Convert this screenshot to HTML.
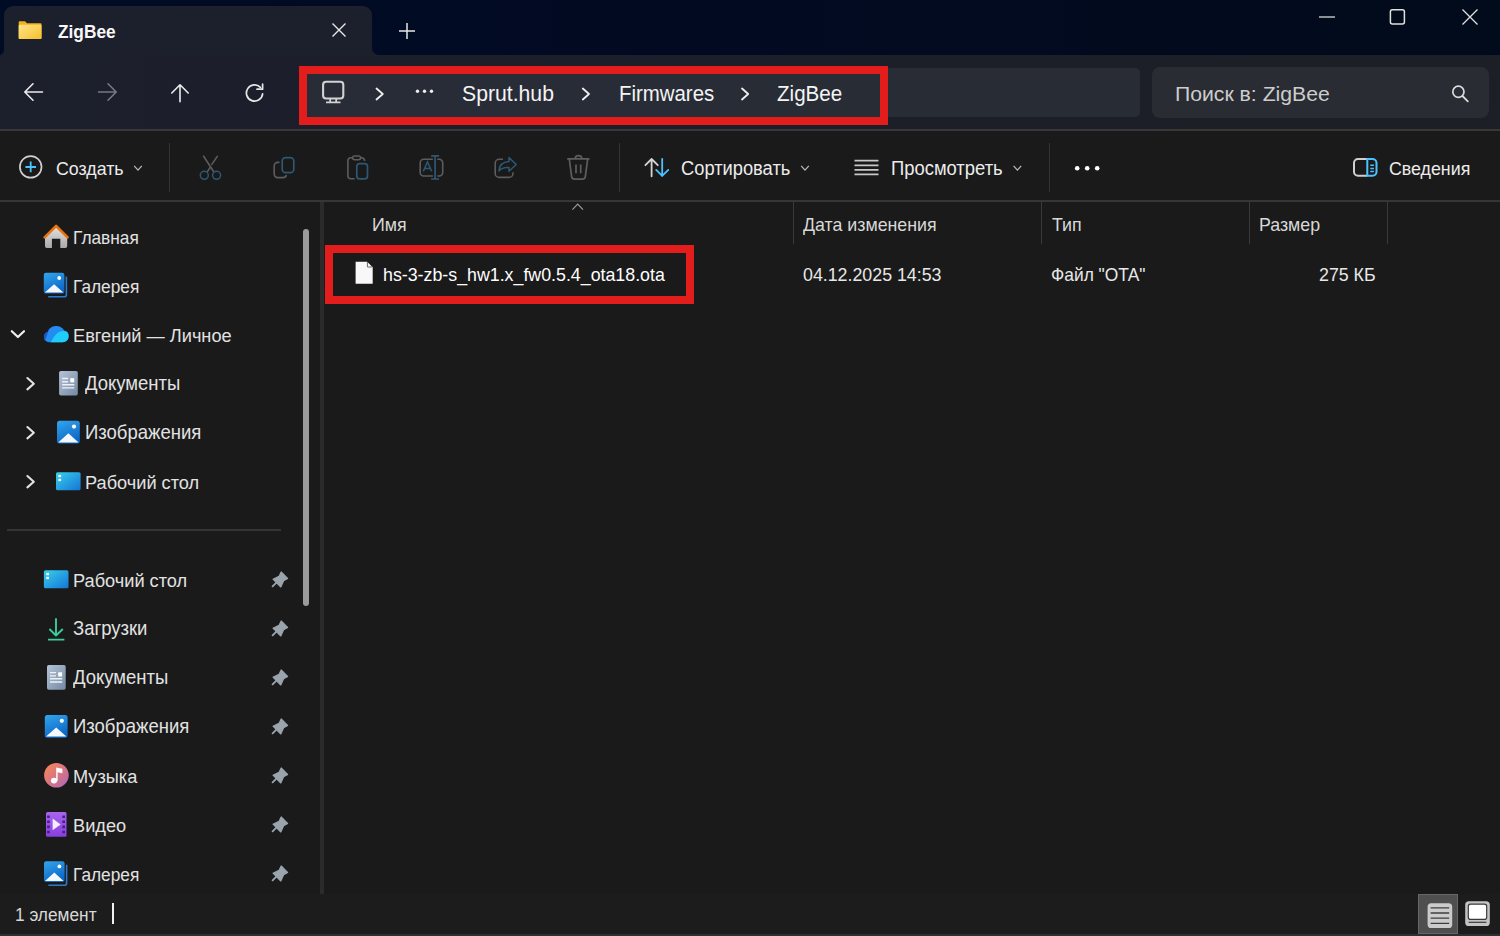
<!DOCTYPE html>
<html><head><meta charset="utf-8">
<style>
*{margin:0;padding:0;box-sizing:border-box}
html,body{width:1500px;height:936px;overflow:hidden;background:#1a1a1a;font-family:"Liberation Sans",sans-serif;color:#e8e8e8}
.a{position:absolute}
.t{position:absolute;white-space:nowrap;line-height:1;transform-origin:0 0}
svg{position:absolute;overflow:visible}
</style></head><body>
<!-- title bar -->
<div class="a" style="left:0;top:0;width:1500px;height:55px;background:linear-gradient(90deg,#000b25 0%,#010a21 45%,#020b1b 100%)"></div>
<!-- address row -->
<div class="a" style="left:0;top:55px;width:1500px;height:74px;background:linear-gradient(90deg,#1c1f2c 0%,#1c1f29 50%,#1c1f25 100%)"></div>
<!-- tab -->
<div class="a" style="left:4px;top:6px;width:368px;height:50px;background:#1c1f2c;border-radius:9px 9px 0 0"></div>
<div class="a" style="left:0;top:45px;width:4px;height:10px;background:#1c1f2c"></div>
<div class="a" style="left:-6px;top:30px;width:10px;height:25px;background:#000b25;border-bottom-right-radius:5px"></div>
<div class="a" style="left:372px;top:45px;width:10px;height:10px;background:#1c1f2c"></div>
<div class="a" style="left:372px;top:30px;width:10px;height:25px;background:#010b24;border-bottom-left-radius:7px"></div>
<!-- separator lines -->
<div class="a" style="left:0;top:129px;width:1500px;height:2px;background:#383838"></div>
<div class="a" style="left:0;top:131px;width:1500px;height:69px;background:#1a1a1a"></div>
<div class="a" style="left:0;top:200px;width:1500px;height:2px;background:#363636"></div>
<!-- address box -->
<div class="a" style="left:303px;top:68px;width:837px;height:49px;background:linear-gradient(90deg,#282c37,#282c34);border-radius:5px"></div>
<div class="a" style="left:299px;top:66px;width:589px;height:59px;border:8px solid #e31c1c"></div>
<!-- search box -->
<div class="a" style="left:1152px;top:67px;width:337px;height:51px;background:#292c33;border-radius:8px"></div>
<!-- command bar text -->
<div class="a" style="left:169px;top:143px;width:1px;height:49px;background:#333"></div>
<div class="a" style="left:619px;top:143px;width:1px;height:49px;background:#333"></div>
<div class="a" style="left:1049px;top:143px;width:1px;height:49px;background:#333"></div>
<!-- nav pane -->
<div class="a" style="left:0;top:202px;width:320px;height:692px;background:#1a1a1a"></div>
<div class="a" style="left:320px;top:202px;width:4px;height:692px;background:#2b2b2b"></div>
<div class="a" style="left:303px;top:229px;width:6px;height:377px;background:#9b9b9b;border-radius:3px"></div>
<div class="a" style="left:7px;top:529px;width:274px;height:2px;background:#353535"></div>
<!-- list -->
<div class="a" style="left:793px;top:202px;width:1px;height:42px;background:#3a3a3a"></div>
<div class="a" style="left:1041px;top:202px;width:1px;height:42px;background:#3a3a3a"></div>
<div class="a" style="left:1249px;top:202px;width:1px;height:42px;background:#3a3a3a"></div>
<div class="a" style="left:1387px;top:202px;width:1px;height:42px;background:#3a3a3a"></div>
<div class="a" style="left:325px;top:245px;width:369px;height:59px;border:8px solid #e31c1c"></div>
<!-- status bar -->
<div class="a" style="left:0;top:894px;width:1500px;height:40px;background:#1c1c1c"></div>
<div class="a" style="left:0;top:934px;width:1500px;height:2px;background:#2d2f33"></div>
<div class="a" style="left:112px;top:903px;width:2px;height:21px;background:#f0f0f0"></div>
<div class="a" style="left:1418px;top:894px;width:40px;height:40px;background:#4f4f4f;border:1px solid #666"></div>
<div class="t" style="left:57.5px;top:22.73px;font-size:18.51px;transform:scaleX(0.9346);color:#f8f8f8;font-weight:700">ZigBee</div>
<div class="t" style="left:462px;top:82.94px;font-size:22.05px;transform:scaleX(0.9615);color:#f4f4f4">Sprut.hub</div>
<div class="t" style="left:619px;top:83.24px;font-size:21.22px;transform:scaleX(0.9615);color:#f4f4f4">Firmwares</div>
<div class="t" style="left:777px;top:83.86px;font-size:21.42px;transform:scaleX(0.9615);color:#f4f4f4">ZigBee</div>
<div class="t" style="left:1175px;top:83.77px;font-size:20.35px;transform:scaleX(1.0417);color:#cdcdcd">Поиск в: ZigBee</div>
<div class="t" style="left:56px;top:159.60px;font-size:18.78px;transform:scaleX(0.9479);color:#ececec">Создать</div>
<div class="t" style="left:681px;top:159.16px;font-size:19.31px;transform:scaleX(0.9479);color:#ececec">Сортировать</div>
<div class="t" style="left:891px;top:159.07px;font-size:19.41px;transform:scaleX(0.9479);color:#ececec">Просмотреть</div>
<div class="t" style="left:1389px;top:159.60px;font-size:18.78px;transform:scaleX(0.9479);color:#ececec">Сведения</div>
<div class="t" style="left:73px;top:228.55px;font-size:18.25px;transform:scaleX(0.9479);color:#e2e2e2">Главная</div>
<div class="t" style="left:73px;top:277.55px;font-size:18.25px;transform:scaleX(0.9479);color:#e2e2e2">Галерея</div>
<div class="t" style="left:73px;top:325.75px;font-size:19.20px;transform:scaleX(0.9479);color:#e2e2e2">Евгений — Личное</div>
<div class="t" style="left:85px;top:374.48px;font-size:19.52px;transform:scaleX(0.9479);color:#e2e2e2">Документы</div>
<div class="t" style="left:85px;top:423.48px;font-size:19.52px;transform:scaleX(0.9479);color:#e2e2e2">Изображения</div>
<div class="t" style="left:85px;top:472.75px;font-size:19.20px;transform:scaleX(0.9479);color:#e2e2e2">Рабочий стол</div>
<div class="t" style="left:73px;top:570.75px;font-size:19.20px;transform:scaleX(0.9479);color:#e2e2e2">Рабочий стол</div>
<div class="t" style="left:73px;top:619.48px;font-size:19.52px;transform:scaleX(0.9479);color:#e2e2e2">Загрузки</div>
<div class="t" style="left:73px;top:668.48px;font-size:19.52px;transform:scaleX(0.9479);color:#e2e2e2">Документы</div>
<div class="t" style="left:73px;top:717.48px;font-size:19.52px;transform:scaleX(0.9479);color:#e2e2e2">Изображения</div>
<div class="t" style="left:73px;top:766.75px;font-size:19.20px;transform:scaleX(0.9479);color:#e2e2e2">Музыка</div>
<div class="t" style="left:73px;top:815.75px;font-size:19.20px;transform:scaleX(0.9479);color:#e2e2e2">Видео</div>
<div class="t" style="left:73px;top:865.55px;font-size:18.25px;transform:scaleX(0.9479);color:#e2e2e2">Галерея</div>
<div class="t" style="left:371.5px;top:215.80px;font-size:18.78px;transform:scaleX(0.9479);color:#d8d8d8">Имя</div>
<div class="t" style="left:803px;top:215.80px;font-size:18.78px;transform:scaleX(0.9479);color:#d8d8d8">Дата изменения</div>
<div class="t" style="left:1051.5px;top:215.80px;font-size:18.78px;transform:scaleX(0.9479);color:#d8d8d8">Тип</div>
<div class="t" style="left:1259px;top:215.80px;font-size:18.78px;transform:scaleX(0.9479);color:#d8d8d8">Размер</div>
<div class="t" style="left:383px;top:265.60px;font-size:18.78px;transform:scaleX(0.9479);color:#fff">hs-3-zb-s_hw1.x_fw0.5.4_ota18.ota</div>
<div class="t" style="left:803px;top:265.60px;font-size:18.78px;transform:scaleX(0.9479)">04.12.2025 14:53</div>
<div class="t" style="left:1051px;top:265.96px;font-size:18.36px;transform:scaleX(0.9479)">Файл "OTA"</div>
<div class="t" style="left:1319px;top:265.60px;font-size:18.78px;transform:scaleX(0.9479)">275 КБ</div>
<div class="t" style="left:15px;top:906.45px;font-size:18.25px;transform:scaleX(0.9479);color:#d8d8d8">1 элемент</div>
<svg width="1500" height="936" style="left:0;top:0" viewBox="0 0 1500 936">
<defs>
<linearGradient id="gFold" x1="0" y1="0" x2="1" y2="1"><stop offset="0" stop-color="#ffe489"/><stop offset="1" stop-color="#f6c02e"/></linearGradient>
<linearGradient id="gHouse" x1="0" y1="0" x2="0" y2="1"><stop offset="0" stop-color="#e2e2e2"/><stop offset="1" stop-color="#a9a9a9"/></linearGradient>
<linearGradient id="gPic" x1="0" y1="0" x2="0.4" y2="1"><stop offset="0" stop-color="#32a6ec"/><stop offset="1" stop-color="#0e68c8"/></linearGradient>
<linearGradient id="gDesk" x1="0" y1="0" x2="1" y2="1"><stop offset="0" stop-color="#38d0ec"/><stop offset="1" stop-color="#1574d6"/></linearGradient>
<linearGradient id="gDoc" x1="0" y1="0" x2="1" y2="1"><stop offset="0" stop-color="#b5c4d6"/><stop offset="1" stop-color="#7489a3"/></linearGradient>
<linearGradient id="gCloud" x1="0" y1="0" x2="1" y2="0"><stop offset="0" stop-color="#1a66dc"/><stop offset="0.45" stop-color="#2596f0"/><stop offset="1" stop-color="#1ed2f8"/></linearGradient>
<linearGradient id="gMusic" x1="0" y1="0" x2="1" y2="1"><stop offset="0" stop-color="#f78b52"/><stop offset="0.5" stop-color="#da7480"/><stop offset="1" stop-color="#ad68bc"/></linearGradient>
<linearGradient id="gVid" x1="0" y1="0" x2="0" y2="1"><stop offset="0" stop-color="#a865ec"/><stop offset="1" stop-color="#8a3ee0"/></linearGradient>
<g id="pin"><path d="M281.2 572 L287.6 578.4 L283.6 580.8 L280.8 587 L273 579.2 L279 576.4 Z" fill="#9aa4ac" stroke="#9aa4ac" stroke-width="1.2" stroke-linejoin="round"/><path d="M277.6 581.4 L272.6 586.4" stroke="#9aa4ac" stroke-width="1.8" stroke-linecap="round"/></g>
<g id="pic"><rect x="0" y="0" width="22.8" height="22.8" rx="2.5" fill="url(#gPic)"/><path d="M1.2 21.6 L11.4 12.4 L21.6 21.6 Z" fill="#f4f8fc"/><circle cx="17" cy="5.8" r="2.1" fill="#fff"/></g>
<g id="gal"><path d="M22.6 3.6 V22 a2 2 0 0 1 -2 2 H4.4" fill="none" stroke="#2c7ad0" stroke-width="1.6"/><rect x="0" y="0" width="20.6" height="20.8" rx="2.2" fill="url(#gPic)"/><path d="M1 19.8 L10.3 11.4 L19.6 19.8 Z" fill="#f4f8fc"/><circle cx="15.4" cy="5.2" r="1.9" fill="#fff"/></g>
<g id="desk"><rect x="0" y="0" width="24.6" height="18.1" rx="1.6" fill="url(#gDesk)"/><rect x="2.4" y="2.7" width="2.7" height="2.3" fill="#fff"/><rect x="2.4" y="6.6" width="2.7" height="2.3" fill="#fff"/></g>
<g id="doc"><rect x="0" y="0" width="18.7" height="24.7" rx="1.8" fill="url(#gDoc)"/><path d="M3 7.6 H9 M3 10.9 H9 M3 13.8 H15.2 M3 17 H15.2" stroke="#eef2f7" stroke-width="1.4"/><rect x="11.2" y="7.3" width="3.9" height="4.2" fill="#fff"/></g>
</defs>

<!-- tab folder -->
<path d="M18.7 22.4 a1 1 0 0 1 1 -1.1 H25 l2 2 H40.5 a1 1 0 0 1 1 1 V38 a1 1 0 0 1 -1 1 H19.7 a1 1 0 0 1 -1 -1 Z" fill="#f2b21b"/>
<path d="M18.7 25.8 a1 1 0 0 1 1 -1 H40.5 a1 1 0 0 1 1 1 V38 a1 1 0 0 1 -1 1 H19.7 a1 1 0 0 1 -1 -1 Z" fill="url(#gFold)"/>
<!-- tab close / plus -->
<path d="M332.5 23.5 L345.5 36.5 M345.5 23.5 L332.5 36.5" stroke="#e8e8e8" stroke-width="1.4"/>
<path d="M407 23 V39 M399 31 H415" stroke="#e8e8e8" stroke-width="1.5"/>
<!-- window controls -->
<path d="M1319 17 H1335" stroke="#d8d8d8" stroke-width="1.3"/>
<rect x="1390.4" y="9.8" width="14" height="14.2" rx="2" fill="none" stroke="#e0e0e0" stroke-width="1.5"/>
<path d="M1462.5 9.5 L1477.5 24.5 M1477.5 9.5 L1462.5 24.5" stroke="#e0e0e0" stroke-width="1.3"/>
<!-- nav buttons -->
<path d="M42.5 92 H25 M33 83.8 L24.8 92 L33 100.2" fill="none" stroke="#ececec" stroke-width="1.6" stroke-linecap="round" stroke-linejoin="round"/>
<path d="M98.5 92 H116 M108 83.8 L116.2 92 L108 100.2" fill="none" stroke="#777a80" stroke-width="1.6" stroke-linecap="round" stroke-linejoin="round"/>
<path d="M180 101.8 V84.8 M171.8 93 L180 84.8 L188.2 93" fill="none" stroke="#ececec" stroke-width="1.6" stroke-linecap="round" stroke-linejoin="round"/>
<path d="M262.6 93.8 A8.1 8.1 0 1 1 260.4 87.4" fill="none" stroke="#e6e6e6" stroke-width="1.7" stroke-linecap="round"/>
<path d="M262.6 84.2 V89.2 H257" fill="none" stroke="#e6e6e6" stroke-width="1.7" stroke-linecap="round" stroke-linejoin="round"/>
<!-- monitor -->
<rect x="323.1" y="81.7" width="20.2" height="16.8" rx="3" fill="none" stroke="#d2d2d4" stroke-width="2.1"/>
<path d="M330.2 99 V102 M336.2 99 V102 M326 102.4 H340.5" stroke="#d2d2d4" stroke-width="1.8"/>
<!-- breadcrumb chevrons, dots -->
<path d="M376.5 88.5 L382.8 94 L376.5 99.5" fill="none" stroke="#f0f0f0" stroke-width="1.8" stroke-linecap="round" stroke-linejoin="round"/>
<circle cx="417.5" cy="91.2" r="1.7" fill="#eee"/><circle cx="424.5" cy="91.2" r="1.7" fill="#eee"/><circle cx="431.5" cy="91.2" r="1.7" fill="#eee"/>
<path d="M582.8 88.5 L589 94 L582.8 99.5" fill="none" stroke="#f0f0f0" stroke-width="1.8" stroke-linecap="round" stroke-linejoin="round"/>
<path d="M742 88.5 L748.2 94 L742 99.5" fill="none" stroke="#f0f0f0" stroke-width="1.8" stroke-linecap="round" stroke-linejoin="round"/>
<!-- search -->
<circle cx="1458.4" cy="91.8" r="5.6" fill="none" stroke="#dcdcdc" stroke-width="1.7"/>
<path d="M1462.5 96 L1467.8 101.3" stroke="#dcdcdc" stroke-width="1.8" stroke-linecap="round"/>

<!-- command bar -->
<circle cx="30.7" cy="166.9" r="10.8" fill="none" stroke="#cfcfcf" stroke-width="1.7"/>
<path d="M25.4 167 H36 M30.7 161.6 V172.3" stroke="#4cc2ff" stroke-width="1.8"/>
<path d="M134.2 165.8 L138 170.2 L141.8 165.8" fill="none" stroke="#bdbdbd" stroke-width="1.2"/>
<!-- scissors -->
<path d="M203.6 156.2 L213.4 171.3 M217.3 156.4 L211.8 164.4 M210.6 166.6 L207.6 171.4" stroke="#5c5c5c" stroke-width="1.6" stroke-linecap="round"/>
<circle cx="204.3" cy="175.3" r="4" fill="none" stroke="#2c5874" stroke-width="1.5"/>
<circle cx="216.6" cy="175.3" r="4" fill="none" stroke="#2c5874" stroke-width="1.5"/>
<!-- copy -->
<path d="M279.5 162.4 H277.7 A3.5 3.5 0 0 0 274.2 165.9 V174.1 A3.5 3.5 0 0 0 277.7 177.6 H283 A3.5 3.5 0 0 0 286.4 175" fill="none" stroke="#5c5c5c" stroke-width="1.6"/>
<rect x="282.2" y="157.6" width="11.6" height="15.1" rx="3.4" fill="none" stroke="#2c5874" stroke-width="1.7"/>
<!-- paste -->
<path d="M352 157.8 H350.9 A3 3 0 0 0 347.9 160.8 V175.7 A3 3 0 0 0 350.9 178.7 H354.6 M361 157.8 H361.6 A3 3 0 0 1 364.6 160.8 V161" fill="none" stroke="#5c5c5c" stroke-width="1.6"/>
<rect x="352.6" y="155.9" width="8" height="3.8" rx="1.9" fill="none" stroke="#5c5c5c" stroke-width="1.5"/>
<rect x="356.8" y="163.6" width="10.7" height="15.3" rx="3" fill="none" stroke="#2c5874" stroke-width="1.7"/>
<!-- rename -->
<path d="M432.9 159.3 H423.7 A3.5 3.5 0 0 0 420.2 162.8 V172.5 A3.5 3.5 0 0 0 423.7 176 H432.9 M437.3 159.3 H439.2 A3.5 3.5 0 0 1 442.7 162.8 V172.5 A3.5 3.5 0 0 1 439.2 176 H437.3" fill="none" stroke="#5c5c5c" stroke-width="1.6"/>
<path d="M435.1 155.6 V179.4 M431.1 155.8 H439.1 M431.1 179 H439.1" stroke="#2c5874" stroke-width="1.7"/>
<path d="M423.3 171.4 L427.5 161.8 L431.7 171.4 M424.6 168.4 H430.4" fill="none" stroke="#2c5874" stroke-width="1.5"/>
<!-- share -->
<path d="M503 159.3 H499.2 A4 4 0 0 0 495.2 163.3 V173.4 A4 4 0 0 0 499.2 177.4 H509 A4 4 0 0 0 513 173.4 V172.2" fill="none" stroke="#5c5c5c" stroke-width="1.6"/>
<path d="M509 157.6 L516.2 164.5 L509 171.3 V167.6 C504.2 167.2 501 168.6 498.9 171 C499.2 165.6 502.4 161.8 509 161.4 Z" fill="none" stroke="#2c5874" stroke-width="1.5" stroke-linejoin="round"/>
<!-- delete -->
<path d="M567.2 158.9 H589.5 M569.3 159 L571.6 176.6 A3 3 0 0 0 574.6 179.1 H582.3 A3 3 0 0 0 585.3 176.6 L587.7 159 M575.2 158.9 A3.3 3.3 0 0 1 581.8 158.9 M576 164.6 V173.3 M580.7 164.6 V173.3" fill="none" stroke="#5e5e5e" stroke-width="1.7"/>
<!-- sort -->
<path d="M651.6 176.3 V159 M645.4 165.2 L651.6 159 L657.8 165.2" fill="none" stroke="#d4d4d4" stroke-width="1.8" stroke-linecap="round" stroke-linejoin="round"/>
<path d="M662.2 158.8 V176 M656.2 169.9 L662.2 175.9 L668.3 169.9" fill="none" stroke="#4cc2ff" stroke-width="1.8" stroke-linecap="round" stroke-linejoin="round"/>
<path d="M801.2 165.8 L805 170.2 L808.8 165.8" fill="none" stroke="#bdbdbd" stroke-width="1.2"/>
<!-- view -->
<path d="M854.5 160.7 H878.5 M854.5 165.3 H878.5 M854.5 169.8 H878.5 M854.5 174.4 H878.5" stroke="#c8c8c8" stroke-width="1.8"/>
<path d="M1013.6 165.8 L1017.4 170.2 L1021.2 165.8" fill="none" stroke="#bdbdbd" stroke-width="1.2"/>
<!-- more -->
<circle cx="1077.2" cy="168.2" r="2.3" fill="#fff"/><circle cx="1087.2" cy="168.2" r="2.3" fill="#fff"/><circle cx="1097.2" cy="168.2" r="2.3" fill="#fff"/>
<!-- details -->
<path d="M1367.3 159.1 H1358 A4 4 0 0 0 1354 163.1 V171.8 A4 4 0 0 0 1358 175.8 H1367.3" fill="none" stroke="#cfcfcf" stroke-width="2"/>
<path d="M1367.3 159.1 H1372.5 A4 4 0 0 1 1376.5 163.1 V171.8 A4 4 0 0 1 1372.5 175.8 H1367.3 Z" fill="none" stroke="#4cc2ff" stroke-width="2"/>
<path d="M1370.3 165.3 H1373.9 M1370.3 168.4 H1373.9 M1370.3 171.5 H1373.9" stroke="#4cc2ff" stroke-width="1.5"/>

<!-- list header caret -->
<path d="M572.4 209.6 L577.7 204.2 L583 209.6" fill="none" stroke="#9a9a9a" stroke-width="1.2"/>
<!-- file icon -->
<path d="M355.6 261.8 H367.2 L372.7 267.2 V283.8 H355.6 Z" fill="#f8f8f8"/>
<path d="M367.4 262 V267 H372.5" fill="none" stroke="#6a6a6a" stroke-width="1"/>

<!-- nav chevrons -->
<path d="M11.8 331.2 L17.9 337 L24 331.2" fill="none" stroke="#f0f0f0" stroke-width="2.2" stroke-linecap="round" stroke-linejoin="round"/>
<path d="M27.4 378.0 L33.8 383.7 L27.4 389.4" fill="none" stroke="#e2e2e2" stroke-width="2.1" stroke-linecap="round" stroke-linejoin="round"/>
<path d="M27.4 427.0 L33.8 432.7 L27.4 438.4" fill="none" stroke="#e2e2e2" stroke-width="2.1" stroke-linecap="round" stroke-linejoin="round"/>
<path d="M27.4 476.0 L33.8 481.7 L27.4 487.4" fill="none" stroke="#e2e2e2" stroke-width="2.1" stroke-linecap="round" stroke-linejoin="round"/>
<!-- home -->
<path d="M45 237.6 L56.1 226.6 L67.2 237.6 V246.3 a1.8 1.8 0 0 1 -1.8 1.8 H60.3 V238.8 H51.9 V248.1 H46.8 a1.8 1.8 0 0 1 -1.8 -1.8 Z" fill="url(#gHouse)"/>
<path d="M44.6 237.4 L56.1 226 L67.6 237.4" fill="none" stroke="#ea7310" stroke-width="2.6" stroke-linejoin="round" stroke-linecap="round"/>
<use href="#gal" x="43.8" y="272.8"/>
<!-- onedrive -->
<clipPath id="cloudc"><path d="M49 342.2 a5 5 0 0 1 -5 -5 a5.2 5.2 0 0 1 3.6 -5.2 a9.2 9.2 0 0 1 16.6 -1.4 a5.6 5.6 0 0 1 4.4 5.8 a5.8 5.8 0 0 1 -5.8 5.8 Z"/></clipPath>
<g clip-path="url(#cloudc)">
<rect x="43" y="324" width="27" height="20" fill="#238cf0"/>
<path d="M40 344 L40 320 L52 322 C50 328 47 334 44 344 Z" fill="#1857d0"/>
<path d="M50 344 C54 336 57 331.5 63 331 C67 331 70 333 71 336 L71 344 Z" fill="#20cdf8"/>
</g>
<use href="#doc" x="59.1" y="370.9"/>
<use href="#pic" x="57" y="420.8"/>
<use href="#desk" x="56" y="472.2"/>
<!-- quick access -->
<use href="#desk" x="43.9" y="570.2"/>
<path d="M56 618.2 V635.6 M49.4 629 L56 635.5 L62.8 629 M48 639.6 H64.4" fill="none" stroke="#3ccb9b" stroke-width="1.9" stroke-linejoin="round"/>
<use href="#doc" x="47" y="665"/>
<use href="#pic" x="44.8" y="715"/>
<circle cx="56.4" cy="775.3" r="12.3" fill="url(#gMusic)"/>
<path d="M56.2 781 V767.4 L62.4 768.8 V773.2 L57.6 772.2 V781 Z" fill="#fff"/>
<ellipse cx="54" cy="780.6" rx="3.1" ry="2.9" fill="#fff"/>
<rect x="46" y="812" width="20.5" height="24.8" rx="1.6" fill="url(#gVid)"/>
<g fill="#4a1f86"><rect x="47.1" y="815.5" width="2.7" height="2.6" rx="0.4"/><rect x="47.1" y="820.5" width="2.7" height="2.6" rx="0.4"/><rect x="47.1" y="825.6" width="2.7" height="2.6" rx="0.4"/><rect x="47.1" y="830.7" width="2.7" height="2.6" rx="0.4"/><rect x="62.3" y="815.5" width="2.7" height="2.6" rx="0.4"/><rect x="62.3" y="820.5" width="2.7" height="2.6" rx="0.4"/><rect x="62.3" y="825.6" width="2.7" height="2.6" rx="0.4"/><rect x="62.3" y="830.7" width="2.7" height="2.6" rx="0.4"/></g>
<path d="M52.6 818.6 L60.6 824.4 L52.6 830.2 Z" fill="#f4eefc"/>
<use href="#gal" x="44" y="861.2"/>
<use href="#pin"/>
<use href="#pin" y="49"/>
<use href="#pin" y="98"/>
<use href="#pin" y="147"/>
<use href="#pin" y="196"/>
<use href="#pin" y="245"/>
<use href="#pin" y="294"/>

<!-- status bar view buttons -->
<rect x="1427.6" y="903.2" width="24.6" height="24.8" rx="3.6" fill="#cbcbcb"/>
<path d="M1430.6 907.8 H1449.2 M1430.6 913 H1449.2 M1430.6 918.2 H1449.2 M1430.6 923.4 H1449.2" stroke="#3e3e3e" stroke-width="1.3"/>
<rect x="1465.2" y="901.2" width="24.6" height="24.8" rx="3.6" fill="#c4c4c4"/>
<rect x="1468.3" y="904.2" width="18.4" height="15.2" rx="2.2" fill="#fff" stroke="#3a3a3a" stroke-width="1.2"/>
<path d="M1468.6 922.3 H1486.4" stroke="#3a3a3a" stroke-width="1.2"/>
</svg>
</body></html>
